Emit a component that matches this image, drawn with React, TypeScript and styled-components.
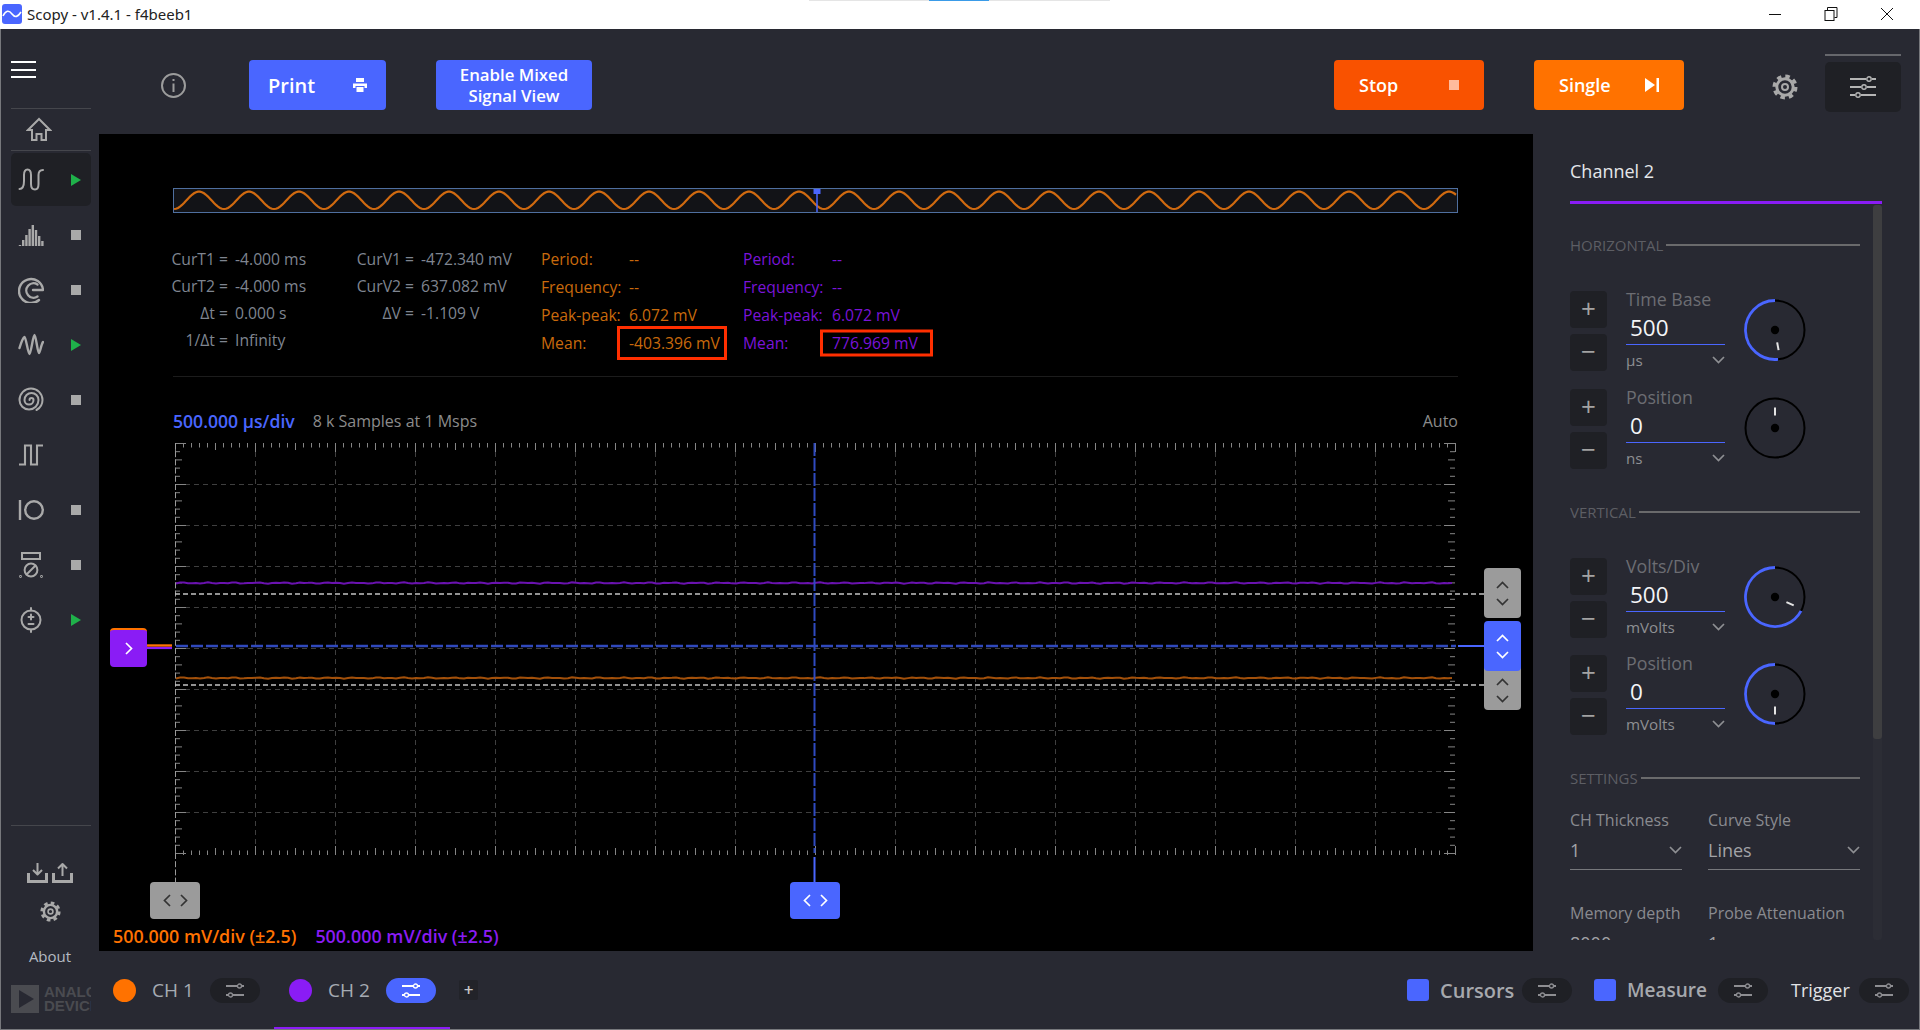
import React, { FC } from "react";
import styled, { createGlobalStyle } from "styled-components";

const BLUE = "#4a66ff";
const PANEL = "#282932";
const DARK = "#1f2025";
const ICON = "#a9a9a9";
const ORANGE = "#ff7200";
const PURPLE = "#8a1cf5";

const GlobalStyle = createGlobalStyle`
  html, body {
    margin: 0;
    padding: 0;
    background: ${PANEL};
  }
  *, *::before, *::after {
    box-sizing: border-box;
  }
  body {
    font-family: "Open Sans", "Noto Sans", sans-serif;
  }
`;

const Window = styled.div`
  width: 1920px;
  height: 1030px;
  display: flex;
  flex-direction: column;
  overflow: hidden;
`;

const TitleBar = styled.div`
  position: relative;
  height: 29px;
  flex: none;
  background: #ffffff;
  display: flex;
  align-items: center;
  padding: 0 0 1px 2px;
`;

const TitleText = styled.span`
  margin-left: 5px;
  font-family: "Noto Sans", sans-serif;
  font-size: 15px;
  color: #222222;
`;

const TaskSliver = styled.div`
  position: absolute;
  top: 0;
  left: 809px;
  width: 301px;
  height: 1px;
  background: linear-gradient(
    to right,
    #e5e5e5 0 120px,
    #3a9be8 120px 180px,
    #e5e5e5 180px
  );
`;

const WindowControls = styled.div`
  margin-left: auto;
  display: flex;
  align-items: center;
  gap: 42px;
  padding-right: 26px;
`;

const Body = styled.div`
  flex: 1;
  min-height: 0;
  display: flex;
  background: ${PANEL};
  border: 1px solid #77787c;
  border-top: none;
`;

/* left tool menu */
const LeftMenu = styled.aside`
  width: 98px;
  flex: none;
  display: flex;
  flex-direction: column;
  padding-top: 32px;
`;

const MenuDivider = styled.div`
  width: 80px;
  height: 1px;
  margin-left: 10px;
  background: #45464c;
`;

const Burger = styled.button`
  width: 25px;
  height: 17px;
  margin: 0 0 30px 10px;
  padding: 0;
  border: none;
  background: transparent;
  display: flex;
  flex-direction: column;
  justify-content: space-between;

  span {
    display: block;
    height: 2px;
    background: #ffffff;
  }
`;

const HomeRow = styled.div`
  height: 41px;
  display: flex;
  align-items: center;
  padding-left: 25px;
`;

const ToolRow = styled.div<{ $active?: boolean }>`
  width: 80px;
  height: ${(p) => (p.$active ? "53px" : "55px")};
  margin: ${(p) => (p.$active ? "2px 0 1px 10px" : "0 0 0 10px")};
  padding: 0 10px 0 7px;
  display: flex;
  align-items: center;
  justify-content: space-between;
  border-radius: 5px;
  background: ${(p) => (p.$active ? DARK : "transparent")};
`;

const StopMark = styled.span`
  width: 10px;
  height: 10px;
  background: ${ICON};
`;

const PlayMark = styled.span`
  width: 0;
  height: 0;
  border-style: solid;
  border-width: 6.5px 0 6.5px 10px;
  border-color: transparent transparent transparent #1fb14a;
`;

const MenuFooter = styled.div`
  margin-top: auto;
  display: flex;
  flex-direction: column;
`;

const TransferIcons = styled.div`
  margin-top: 36px;
  padding-left: 26px;
  display: flex;
  gap: 4px;
`;

const FooterGear = styled.div`
  margin-top: 18px;
  display: flex;
  justify-content: center;
`;

const AboutLabel = styled.div`
  margin-top: 23px;
  text-align: center;
  font-size: 15px;
  line-height: 22px;
  color: #b4bac2;
`;

const AdiLogo = styled.div`
  width: 80px;
  height: 29px;
  margin: 18px 0 15px 10px;
  display: flex;
  gap: 5px;
  overflow: hidden;
`;

const AdiMark = styled.div`
  width: 28px;
  height: 28px;
  flex: none;
  background: #4a4b50;
  display: flex;
  align-items: center;
  justify-content: center;

  &::before {
    content: "";
    border-style: solid;
    border-width: 9px 0 9px 15px;
    border-color: transparent transparent transparent ${PANEL};
    margin-left: 3px;
  }
`;

const AdiText = styled.div`
  font-family: "Liberation Sans", sans-serif;
  font-weight: 700;
  font-size: 15px;
  line-height: 14px;
  color: #4a4b50;
  white-space: nowrap;
`;

/* main column */
const Main = styled.div`
  flex: 1;
  min-width: 0;
  display: flex;
  flex-direction: column;
`;

const Toolbar = styled.div`
  height: 105px;
  flex: none;
  display: flex;
  align-items: flex-start;
  padding: 31px 18px 0 62px;
`;

const InfoSlot = styled.div`
  width: 25px;
  height: 50px;
  margin-right: 63px;
  display: flex;
  align-items: center;
`;

const ActionButton = styled.button<{ $bg: string; $w: number; $pad: number; $size?: number }>`
  width: ${(p) => p.$w}px;
  height: 50px;
  flex: none;
  border: none;
  border-radius: 4px;
  background: ${(p) => p.$bg};
  color: #ffffff;
  font-family: "Open Sans", sans-serif;
  font-weight: 600;
  font-size: ${(p) => p.$size ?? 18}px;
  padding: 0 ${(p) => p.$pad}px;
  display: flex;
  align-items: center;
  justify-content: space-between;
`;

const TwoLineButton = styled(ActionButton)`
  margin-left: 50px;
  justify-content: center;
  text-align: center;
  line-height: 21px;
`;

const RunButtons = styled.div`
  margin-left: auto;
  display: flex;
  gap: 50px;
`;

const GearSlot = styled.div`
  width: 26px;
  height: 26px;
  margin: 14px 27px 0 88px;
`;

const PanelToggle = styled.div`
  width: 76px;
  height: 50px;
  margin-top: 2px;
  position: relative;
  border-radius: 5px;
  background: ${DARK};
  display: flex;
  align-items: center;
  justify-content: center;

  &::before {
    content: "";
    position: absolute;
    left: 0;
    right: 0;
    top: -8px;
    height: 2px;
    background: #66676c;
  }
`;

const Workspace = styled.div`
  flex: 1;
  min-height: 0;
  display: flex;
`;

const PlotArea = styled.section`
  flex: 1;
  min-width: 0;
  background: #000000;
  display: flex;
  flex-direction: column;
`;

const PlotHead = styled.div`
  padding: 54px 75px 0 74px;
`;

const Overview = styled.div`
  height: 25px;
  border: 1px solid #4f6f9f;
  background: #121317;

  svg {
    display: block;
  }
`;

const Readouts = styled.div`
  margin: 32px 0 0 -2px;
  display: flex;
  font-size: 15.7px;
  height: 112px;
`;

const ReadoutGrid = styled.div<{ $w: number; $label: number; $gap: number; $row: number; $color: string; $right?: boolean }>`
  width: ${(p) => p.$w}px;
  flex: none;
  display: grid;
  grid-template-columns: ${(p) => p.$label}px auto;
  column-gap: ${(p) => p.$gap}px;
  grid-auto-rows: ${(p) => p.$row}px;
  align-items: center;
  justify-content: start;
  color: ${(p) => p.$color};
  white-space: nowrap;

  & > span:nth-child(odd) {
    text-align: ${(p) => (p.$right ? "right" : "left")};
  }
`;

const BoxedValue = styled.span<{ $w: number; $h: number }>`
  position: relative;

  &::after {
    content: "";
    position: absolute;
    left: -12px;
    top: 50%;
    width: ${(p) => p.$w}px;
    height: ${(p) => p.$h}px;
    transform: translateY(-50%);
    border: 3px solid #ff2f00;
  }
`;

const HeadDivider = styled.div`
  height: 1px;
  margin-top: 19px;
  background: #1c1c1c;
`;

const PlotInfo = styled.div`
  margin-top: 34px;
  height: 20px;
  display: flex;
  align-items: center;
  font-size: 16px;
  color: #8b8b8b;
`;

const TimeDiv = styled.span`
  color: ${BLUE};
  font-weight: 600;
  font-size: 17.6px;
  margin-right: 18px;
`;

const AutoLabel = styled.span`
  margin-left: auto;
`;

const Stage = styled.div`
  position: relative;
  height: 487px;
  margin-top: 2px;
  flex: none;

  & > svg {
    display: block;
  }
`;

const Handle = styled.div<{ $left: number; $top: number; $w: number; $h: number; $bg: string; $pad?: number }>`
  position: absolute;
  left: ${(p) => p.$left}px;
  top: ${(p) => p.$top}px;
  width: ${(p) => p.$w}px;
  height: ${(p) => p.$h}px;
  padding-top: ${(p) => p.$pad ?? 0}px;
  background: ${(p) => p.$bg};
  border-radius: 4px;
  display: flex;
  align-items: center;
  justify-content: center;
`;

const TriggerHandle = styled.div`
  position: absolute;
  left: 11px;
  top: 195px;
  width: 37px;
  height: 39px;
  background: ${PURPLE};
  border-top: 2px solid ${ORANGE};
  border-radius: 4px;
  display: flex;
  align-items: center;
  justify-content: center;
`;

const ScaleRow = styled.div`
  height: 30px;
  padding: 1px 0 0 14px;
  display: flex;
  align-items: center;
  gap: 19px;
`;

const ScaleLabel = styled.span<{ $color: string }>`
  color: ${(p) => p.$color};
  font-weight: 600;
  font-size: 17.9px;
`;

/* right hand channel panel */
const SidePanel = styled.aside`
  width: 386px;
  flex: none;
  padding: 0 0 11px 37px;
  display: flex;
  flex-direction: column;
`;

const ChannelTitle = styled.div`
  height: 70px;
  padding-top: 22px;
  font-size: 18px;
  line-height: 30px;
  color: #e4e6ea;
  width: 312px;
  flex: none;
  border-bottom: 3px solid ${PURPLE};
`;

const PanelScroll = styled.div`
  flex: 1;
  min-height: 0;
  display: flex;
  width: 312px;
`;

const PanelContent = styled.div`
  width: 290px;
  flex: none;
  overflow: hidden;
`;

const ScrollTrack = styled.div`
  width: 10px;
  margin-left: 13px;
  margin-top: 1px;
  background: #2c2d35;
  border-radius: 3px;

  &::before {
    content: "";
    display: block;
    height: 534px;
    border-radius: 3px;
    background: #3e3e40;
  }
`;

const SectionHead = styled.div<{ $top: number }>`
  height: 20px;
  margin-top: ${(p) => p.$top}px;
  display: flex;
  align-items: center;
  gap: 3px;
  font-size: 15px;
  color: #5d5e64;

  &::after {
    content: "";
    flex: 1;
    height: 1.5px;
    background: #6a6a6c;
  }
`;

const ControlBlock = styled.div<{ $top: number }>`
  height: 80px;
  margin-top: ${(p) => p.$top}px;
  display: flex;
  align-items: flex-start;
`;

const Steppers = styled.div`
  width: 37px;
  flex: none;
  display: flex;
  flex-direction: column;
  gap: 6px;
  margin-right: 19px;
`;

const StepButton = styled.div`
  height: 37px;
  border-radius: 4px;
  background: ${DARK};
  color: #a3a3a3;
  font-size: 26px;
  line-height: 35px;
  text-align: center;
`;

const Field = styled.div`
  width: 99px;
  flex: none;
`;

const FieldLabel = styled.div`
  height: 20px;
  font-size: 17.8px;
  line-height: 17px;
  color: #6c6d72;
  white-space: nowrap;
`;

const FieldValue = styled.div`
  height: 34px;
  padding-left: 4px;
  font-size: 22.5px;
  line-height: 34px;
  color: #f4f5f7;
  border-bottom: 1.5px solid ${BLUE};
`;

const FieldUnit = styled.div`
  margin-top: 3px;
  height: 24px;
  display: flex;
  align-items: center;
  justify-content: space-between;
  font-size: 15.2px;
  color: #8e8f93;
`;

const KnobSlot = styled.div`
  margin: 7px 0 0 18px;
  width: 64px;
  height: 64px;
  flex: none;
`;

const SettingsGrid = styled.div`
  margin-top: 22px;
  display: grid;
  grid-template-columns: 112px 152px;
  column-gap: 26px;
  row-gap: 33px;
`;

const SettingLabel = styled.div`
  height: 20px;
  font-size: 16px;
  line-height: 20px;
  color: #8a8b90;
  white-space: nowrap;
`;

const SettingValue = styled.div`
  height: 40px;
  display: flex;
  align-items: center;
  justify-content: space-between;
  font-size: 18px;
  color: #a2a3a7;
  border-bottom: 1.5px solid #77787c;
`;

/* bottom channel bar */
const BottomBar = styled.div`
  position: relative;
  height: 78px;
  flex: none;
  display: flex;
  align-items: center;
  padding: 0 10px 0 14px;
`;

const ChannelDot = styled.span<{ $color: string }>`
  width: 23px;
  height: 23px;
  flex: none;
  border-radius: 50%;
  background: ${(p) => p.$color};
`;

const ChannelName = styled.span`
  margin-left: 16px;
  width: 58px;
  font-size: 19px;
  color: #a6abb3;
`;

const Pill = styled.div<{ $on?: boolean }>`
  width: 50px;
  height: 25px;
  flex: none;
  border-radius: 13px;
  background: ${(p) => (p.$on ? BLUE : DARK)};
  display: flex;
  align-items: center;
  justify-content: center;
`;

const AddChannel = styled.div`
  width: 19px;
  height: 20px;
  margin-left: 23px;
  border-radius: 2px;
  background: #222329;
  color: #c8c8c8;
  font-size: 17px;
  font-weight: 600;
  line-height: 19px;
  text-align: center;
`;

const ChannelGroup = styled.div<{ $gap?: number }>`
  display: flex;
  align-items: center;
  margin-left: ${(p) => p.$gap ?? 0}px;
`;

const ActiveTabLine = styled.div`
  position: absolute;
  left: 175px;
  bottom: 0;
  width: 176px;
  height: 2px;
  background: ${PURPLE};
`;

const ToolGroups = styled.div`
  margin-left: auto;
  display: flex;
  align-items: center;
`;

const ToolCheck = styled.span`
  width: 22px;
  height: 22px;
  flex: none;
  border-radius: 3px;
  background: ${BLUE};
`;

const ToolName = styled.span<{ $bright?: boolean; $w: number; $size: number }>`
  width: ${(p) => p.$w}px;
  flex: none;
  font-size: ${(p) => p.$size}px;
  font-weight: ${(p) => (p.$bright ? 500 : 600)};
  color: ${(p) => (p.$bright ? "#e2e4e7" : "#a6a8ad")};
  margin-left: 11px;
`;

/* drawings */
const Stroke: FC<{ w?: number; h?: number; box?: string; sw?: number; color?: string; children: React.ReactNode }> = ({
  w = 26,
  h = 26,
  box = "0 0 26 26",
  sw = 2,
  color = ICON,
  children,
}) => (
  <svg
    width={w}
    height={h}
    viewBox={box}
    fill="none"
    stroke={color}
    strokeWidth={sw}
    strokeLinecap="round"
    strokeLinejoin="round"
  >
    {children}
  </svg>
);

const CogIcon: FC<{ size: number }> = ({ size }) => (
  <svg width={size} height={size} viewBox="0 0 26 26" fill="none" stroke={ICON}>
    <circle cx="13" cy="13" r="8.2" strokeWidth="3" />
    <circle cx="13" cy="13" r="10.8" strokeWidth="3.4" strokeDasharray="4.5 3.98" />
    <circle cx="13" cy="13" r="3" strokeWidth="2" />
  </svg>
);

const SliderIcon: FC<{ color?: string; lines?: number }> = ({ color = "#8e8e92", lines = 2 }) =>
  lines === 3 ? (
    <svg width="26" height="22" viewBox="0 0 26 22" fill="none" stroke={color} strokeWidth="2">
      <path d="M0 3h16M22 3h4M0 11h11M17 11h9M0 19h5M11 19h15" />
      <circle cx="19" cy="3" r="2.2" strokeWidth="1.4" />
      <circle cx="14" cy="11" r="2.2" strokeWidth="1.4" />
      <circle cx="8" cy="19" r="2.2" strokeWidth="1.4" />
    </svg>
  ) : (
    <svg width="18" height="15" viewBox="0 0 18 15" fill="none" stroke={color} strokeWidth="1.8">
      <path d="M0 3h11M16 3h2M0 12h2M7 12h11" />
      <circle cx="13.5" cy="3" r="2" strokeWidth="1.3" />
      <circle cx="4.5" cy="12" r="2" strokeWidth="1.3" />
    </svg>
  );

const Chevron: FC<{ dir: "up" | "down" | "left" | "right"; color: string; w?: number; h?: number }> = ({
  dir,
  color,
  w = 13,
  h = 8,
}) => {
  const paths = {
    up: "M1 7 L6.5 1.5 L12 7",
    down: "M1 1 L6.5 6.5 L12 1",
    left: "M7 1 L1.5 6.5 L7 12",
    right: "M1 1 L6.5 6.5 L1 12",
  };
  const vertical = dir === "up" || dir === "down";
  return (
    <svg width={vertical ? w : h} height={vertical ? h : w} viewBox={vertical ? "0 0 13 8" : "0 0 8 13"} fill="none" stroke={color} strokeWidth="1.7">
      <path d={paths[dir]} />
    </svg>
  );
};

const ChevronStack = styled.div`
  display: flex;
  flex-direction: column;
  align-items: center;
  gap: 9px;
`;

const ChevronPair = styled.div`
  display: flex;
  align-items: center;
  gap: 9px;
`;

const Knob: FC<{ sweep: number; tick: number }> = ({ sweep, tick }) => {
  const c = 32;
  const r = 29.5;
  const end = ((-sweep - 90) * Math.PI) / 180;
  const ex = c + r * Math.cos(end);
  const ey = c + r * Math.sin(end);
  const t = ((tick - 90) * Math.PI) / 180;
  return (
    <svg width="64" height="64" viewBox="0 0 64 64" fill="none">
      <circle cx={c} cy={c} r={r} stroke="#000000" strokeWidth="2" />
      {sweep > 0 && (
        <path
          d={`M${c} ${c - r} A${r} ${r} 0 ${sweep > 180 ? 1 : 0} 0 ${ex} ${ey}`}
          stroke={BLUE}
          strokeWidth="2.8"
        />
      )}
      <circle cx={c} cy={c} r="4.2" fill="#000000" />
      <line
        x1={c + 12.5 * Math.cos(t)}
        y1={c + 12.5 * Math.sin(t)}
        x2={c + 20.5 * Math.cos(t)}
        y2={c + 20.5 * Math.sin(t)}
        stroke="#e4e4e4"
        strokeWidth="2"
      />
    </svg>
  );
};

const sinePath = () => {
  const pts: string[] = [];
  for (let x = 0; x <= 1283; x += 2) {
    const y = 11.3 - 8.7 * Math.cos(((x - 25) / 50) * 2 * Math.PI);
    pts.push(`${x},${y.toFixed(2)}`);
  }
  return pts.join(" ");
};

const noisyLine = (y: number) => {
  const pts: string[] = [];
  for (let x = 176; x <= 1455; x += 4) {
    const n = Math.sin(x * 0.37) * Math.sin(x * 0.113) * 0.7;
    pts.push(`${x},${(y + n).toFixed(2)}`);
  }
  return pts.join(" ");
};

const OverviewLine: FC = () => (
  <svg width="1283" height="23" viewBox="0 0 1283 23" fill="none">
    <polyline points={sinePath()} stroke="#d06a10" strokeWidth="2.2" />
    <line x1="643" y1="0" x2="643" y2="23" stroke={BLUE} strokeWidth="1.5" />
    <rect x="639.5" y="-1" width="7" height="6" fill={BLUE} />
  </svg>
);

// plot drawn in page coordinates, the viewBox is the stage's place on the page
const ScopePlot: FC = () => {
  const xs = Array.from({ length: 161 }, (_, i) => i);
  const ys = Array.from({ length: 51 }, (_, i) => i);
  const divX = Array.from({ length: 15 }, (_, i) => 175.5 + 80 * (i + 1)).filter((x) => x !== 815.5);
  const divY = Array.from({ length: 9 }, (_, i) => 483.5 + 41 * i);
  return (
    <svg width="1433" height="487" viewBox="99 432 1433 487" fill="none">
      <g stroke="#3f3f3f" strokeWidth="1" strokeDasharray="5 4">
        {divX.map((x) => (
          <line key={x} x1={x} y1="442" x2={x} y2="854" />
        ))}
        {divY.map((y) => (
          <line key={y} x1="176" y1={y} x2="1455" y2={y} />
        ))}
      </g>
      <g stroke="#858585" strokeWidth="1">
        {xs.map((i) => {
          const x = 175.5 + i * 8;
          const len = i % 10 === 0 ? 9 : i % 5 === 0 ? 7 : 4.5;
          return (
            <g key={i}>
              <line x1={x} y1="442" x2={x} y2={442 + len} />
              <line x1={x} y1="854" x2={x} y2={854 - len} />
            </g>
          );
        })}
        {ys.map((i) => {
          const y = 442.5 + i * 8.2;
          const len = i % 5 === 0 ? 11 : i % 5 === 2 ? 7 : 5;
          return (
            <g key={i}>
              <line x1="175" y1={y} x2={175 + len} y2={y} />
              <line x1="1455" y1={y} x2={1455 - len} y2={y} />
            </g>
          );
        })}
      </g>
      <line x1="175.5" y1="442" x2="175.5" y2="881" stroke="#9a9a9a" strokeDasharray="6 2.2" />
      <polyline points={noisyLine(582)} stroke="#6a12b0" strokeWidth="2" />
      <polyline points={noisyLine(677)} stroke="#a3500a" strokeWidth="2" />
      <g stroke="#c4c4c4" strokeWidth="1.3" strokeDasharray="5 3">
        <line x1="175" y1="593" x2="1484" y2="593" />
        <line x1="175" y1="684" x2="1484" y2="684" />
      </g>
      <line x1="176" y1="645" x2="1456" y2="645" stroke="#3049bd" strokeWidth="2.4" strokeDasharray="12 3" />
      <line x1="1458" y1="645" x2="1486" y2="645" stroke={BLUE} strokeWidth="2" />
      <line x1="814.5" y1="442" x2="814.5" y2="852" stroke="#2f4ac0" strokeWidth="2" strokeDasharray="13 2" />
      <line x1="814.5" y1="856" x2="814.5" y2="882" stroke={BLUE} strokeWidth="2" />
      <line x1="147" y1="644.5" x2="172" y2="644.5" stroke={ORANGE} strokeWidth="2.4" />
      <line x1="147" y1="647" x2="172" y2="647" stroke={PURPLE} strokeWidth="2.2" />
    </svg>
  );
};

const tools: { key: string; run?: boolean; stop?: boolean; icon: React.ReactNode }[] = [
  {
    key: "osc",
    run: true,
    icon: (
      <Stroke>
        <path d="M1.5 22 C5 22 6 19 6 14 V8 C6 4 7.5 2.5 9.5 2.5 C12 2.5 13 4.5 13 8 V17 C13 20.5 14.5 22.5 17 22.5 C19.5 22.5 20.5 20.5 20.5 17 V8 C20.5 5 22 3 25 3" />
      </Stroke>
    ),
  },
  {
    key: "spectrum",
    stop: true,
    icon: (
      <Stroke sw={2.4}>
        {[23, 18, 13, 7, 3, 8, 14, 19].map((top, i) => (
          <line key={i} x1={2 + i * 3.2} y1={top} x2={2 + i * 3.2} y2="24" strokeLinecap="butt" />
        ))}
      </Stroke>
    ),
  },
  {
    key: "network",
    stop: true,
    icon: (
      <Stroke sw={2.4}>
        <path d="M21 23 A12 12 0 1 1 25 13 H15" />
        <path d="M19.5 19.5 A7.2 7.2 0 1 1 19.5 7.5" />
      </Stroke>
    ),
  },
  {
    key: "siggen",
    run: true,
    icon: (
      <Stroke sw={2.4}>
        <path d="M1.5 16 C3 11 5 6 6.5 5 C8 5 10 22 11.5 22 C13 22 15 3 16.5 3 C18 3 19.5 21 21 21 C22 21 23 13 25 10" />
      </Stroke>
    ),
  },
  {
    key: "logic",
    stop: true,
    icon: (
      <Stroke sw={2}>
        <path d="M11.5 13 a2 2 0 0 1 4 0 a4.5 4.5 0 0 1 -9 0 a7 7 0 0 1 14 0 a9.5 9.5 0 0 1 -19 0 a11.5 11.5 0 0 1 23 0 a11.5 11.5 0 0 1 -6 10" />
      </Stroke>
    ),
  },
  {
    key: "pattern",
    icon: (
      <Stroke sw={2.1} h={22} box="0 0 26 22">
        <path d="M1 20.5 H7 V1.5 H13 V20.5 H19 V1.5 H25" strokeLinecap="butt" strokeLinejoin="miter" />
      </Stroke>
    ),
  },
  {
    key: "dio",
    stop: true,
    icon: (
      <Stroke sw={2.4} h={22} box="0 0 26 22">
        <line x1="2" y1="1" x2="2" y2="21" strokeLinecap="butt" />
        <circle cx="16" cy="11" r="8.8" />
      </Stroke>
    ),
  },
  {
    key: "power",
    stop: true,
    icon: (
      <Stroke sw={2}>
        <rect x="4" y="1" width="18" height="6" strokeLinejoin="miter" />
        <circle cx="13" cy="18" r="6.4" />
        <line x1="8.5" y1="22.5" x2="17.5" y2="13.5" />
        <circle cx="2.5" cy="24.5" r="0.4" />
        <circle cx="23.5" cy="24.5" r="0.4" />
      </Stroke>
    ),
  },
  {
    key: "dmm",
    run: true,
    icon: (
      <Stroke sw={2}>
        <circle cx="13" cy="13" r="9.5" />
        <path d="M13 1 V3.5 M13 22.5 V25 M13 7.5 V12.5 M10.5 10 H15.5 M10.5 17 H15.5" />
      </Stroke>
    ),
  },
];

const panelIcons = {
  info: (
    <svg width="25" height="25" viewBox="0 0 25 25" fill="none" stroke="#9c9c9c" strokeWidth="2">
      <circle cx="12.5" cy="12.5" r="11.5" />
      <line x1="12.5" y1="10.5" x2="12.5" y2="19" />
      <line x1="12.5" y1="6" x2="12.5" y2="8" />
    </svg>
  ),
  print: (
    <svg width="14" height="14" viewBox="0 0 14 14" fill="#ffffff">
      <rect x="3" y="0" width="8" height="4" />
      <path d="M0 5.5 H14 V10 H11.5 V8 H2.5 V10 H0 Z" />
      <rect x="3.5" y="9" width="7" height="5" />
    </svg>
  ),
  skip: (
    <svg width="14" height="14" viewBox="0 0 14 14" fill="#ffffff">
      <path d="M0 0 L10 7 L0 14 Z" />
      <rect x="11.5" y="0" width="2.5" height="14" />
    </svg>
  ),
};

const Readout: FC<{ rows: [string, string][]; w: number; label: number; gap: number; row: number; color: string; right?: boolean; boxed?: { w: number; h: number } }> = ({
  rows,
  w,
  label,
  gap,
  row,
  color,
  right,
  boxed,
}) => (
  <ReadoutGrid $w={w} $label={label} $gap={gap} $row={row} $color={color} $right={right}>
    {rows.map(([k, v], i) => (
      <React.Fragment key={k}>
        <span>{k}</span>
        {boxed && i === rows.length - 1 ? <BoxedValue $w={boxed.w} $h={boxed.h}>{v}</BoxedValue> : <span>{v}</span>}
      </React.Fragment>
    ))}
  </ReadoutGrid>
);

const Control: FC<{ top: number; label: string; value: string; unit: string; sweep: number; tick: number }> = ({
  top,
  label,
  value,
  unit,
  sweep,
  tick,
}) => (
  <ControlBlock $top={top}>
    <Steppers>
      <StepButton>+</StepButton>
      <StepButton>−</StepButton>
    </Steppers>
    <Field>
      <FieldLabel>{label}</FieldLabel>
      <FieldValue>{value}</FieldValue>
      <FieldUnit>
        {unit}
        <Chevron dir="down" color="#8e8f93" />
      </FieldUnit>
    </Field>
    <KnobSlot>
      <Knob sweep={sweep} tick={tick} />
    </KnobSlot>
  </ControlBlock>
);

const measure = (mean: string): [string, string][] => [
  ["Period:", "--"],
  ["Frequency:", "--"],
  ["Peak-peak:", "6.072 mV"],
  ["Mean:", mean],
];

const App: FC = () => {
  return (
    <Window>
      <GlobalStyle />
      <TitleBar>
        <svg width="20" height="20" viewBox="0 0 20 20">
          <rect width="20" height="20" rx="3" fill={BLUE} />
          <path d="M1 12 C4 6 7 6 10 10 C13 14 16 13 19 8" fill="none" stroke="#ffffff" strokeWidth="1.6" />
        </svg>
        <TitleText>Scopy - v1.4.1 - f4beeb1</TitleText>
        <TaskSliver />
        <WindowControls>
          <svg width="14" height="14" viewBox="0 0 14 14" stroke="#111111" fill="none">
            <line x1="1" y1="7.5" x2="13" y2="7.5" />
          </svg>
          <svg width="14" height="14" viewBox="0 0 14 14" stroke="#111111" fill="none">
            <rect x="1" y="3.5" width="9" height="10" />
            <path d="M3.5 3 V0.5 H13 V10.5 H10.5" />
          </svg>
          <svg width="14" height="14" viewBox="0 0 14 14" stroke="#111111" fill="none">
            <path d="M1 1 L13 13 M13 1 L1 13" />
          </svg>
        </WindowControls>
      </TitleBar>
      <Body>
        <LeftMenu>
          <Burger>
            <span />
            <span />
            <span />
          </Burger>
          <MenuDivider />
          <HomeRow>
            <Stroke>
              <path d="M13 2 L2 13 H6 V23 H10.5 V17 H15.5 V23 H20 V13 H24 Z" strokeLinejoin="miter" />
            </Stroke>
          </HomeRow>
          <MenuDivider />
          {tools.map((t, i) => (
            <ToolRow key={t.key} $active={i === 0}>
              {t.icon}
              {t.run && <PlayMark />}
              {t.stop && <StopMark />}
            </ToolRow>
          ))}
          <MenuFooter>
            <MenuDivider />
            <TransferIcons>
              <Stroke w={21} h={21} box="0 0 21 21" sw={3}>
                <path d="M1.5 11 V19.5 H19.5 V11" strokeLinecap="butt" strokeLinejoin="miter" />
                <path d="M10.5 1 V12 M6 8 L10.5 12.5 L15 8" strokeLinecap="butt" strokeWidth="2" />
              </Stroke>
              <Stroke w={21} h={21} box="0 0 21 21" sw={3}>
                <path d="M1.5 11 V19.5 H19.5 V11" strokeLinecap="butt" strokeLinejoin="miter" />
                <path d="M10.5 14 V2 M6 6.5 L10.5 2 L15 6.5" strokeLinecap="butt" strokeWidth="2" />
              </Stroke>
            </TransferIcons>
            <FooterGear>
              <CogIcon size={21} />
            </FooterGear>
            <AboutLabel>About</AboutLabel>
            <AdiLogo>
              <AdiMark />
              <AdiText>
                ANALOG
                <br />
                DEVICES
              </AdiText>
            </AdiLogo>
          </MenuFooter>
        </LeftMenu>
        <Main>
          <Toolbar>
            <InfoSlot>{panelIcons.info}</InfoSlot>
            <ActionButton $bg={BLUE} $w={137} $pad={19} $size={20}>
              Print
              {panelIcons.print}
            </ActionButton>
            <TwoLineButton $bg={BLUE} $w={156} $pad={8} $size={16.8}>
              Enable Mixed
              <br />
              Signal View
            </TwoLineButton>
            <RunButtons>
              <ActionButton $bg="#f95200" $w={150} $pad={25}>
                Stop
                <svg width="10" height="10" viewBox="0 0 10 10">
                  <rect width="10" height="10" fill="#ffbb9c" />
                </svg>
              </ActionButton>
              <ActionButton $bg={ORANGE} $w={150} $pad={25}>
                Single
                {panelIcons.skip}
              </ActionButton>
            </RunButtons>
            <GearSlot>
              <CogIcon size={26} />
            </GearSlot>
            <PanelToggle>
              <SliderIcon color="#b5b5b5" lines={3} />
            </PanelToggle>
          </Toolbar>
          <Workspace>
            <PlotArea>
              <PlotHead>
                <Overview>
                  <OverviewLine />
                </Overview>
                <Readouts>
                  <Readout
                    w={184}
                    label={57}
                    gap={7}
                    row={27}
                    color="#7f8590"
                    right
                    rows={[
                      ["CurT1 =", "-4.000 ms"],
                      ["CurT2 =", "-4.000 ms"],
                      ["Δt =", "0.000 s"],
                      ["1/Δt =", "Infinity"],
                    ]}
                  />
                  <Readout
                    w={186}
                    label={59}
                    gap={7}
                    row={27}
                    color="#7f8590"
                    right
                    rows={[
                      ["CurV1 =", "-472.340 mV"],
                      ["CurV2 =", "637.082 mV"],
                      ["ΔV =", "-1.109 V"],
                    ]}
                  />
                  <Readout
                    w={202}
                    label={81}
                    gap={7}
                    row={28}
                    color="#c96a0c"
                    rows={measure("-403.396 mV")}
                    boxed={{ w: 110, h: 34 }}
                  />
                  <Readout
                    w={200}
                    label={82}
                    gap={7}
                    row={28}
                    color="#7a14d8"
                    rows={measure("776.969 mV")}
                    boxed={{ w: 113, h: 27 }}
                  />
                </Readouts>
                <HeadDivider />
                <PlotInfo>
                  <TimeDiv>500.000 µs/div</TimeDiv>8 k Samples at 1 Msps
                  <AutoLabel>Auto</AutoLabel>
                </PlotInfo>
              </PlotHead>
              <Stage>
                <ScopePlot />
                <TriggerHandle>
                  <Chevron dir="right" color="#ffffff" />
                </TriggerHandle>
                <Handle $left={51} $top={449} $w={50} $h={37} $bg="#9b9b9b">
                  <ChevronPair>
                    <Chevron dir="left" color="#333333" />
                    <Chevron dir="right" color="#333333" />
                  </ChevronPair>
                </Handle>
                <Handle $left={691} $top={449} $w={50} $h={37} $bg={BLUE}>
                  <ChevronPair>
                    <Chevron dir="left" color="#ffffff" />
                    <Chevron dir="right" color="#ffffff" />
                  </ChevronPair>
                </Handle>
                <Handle $left={1385} $top={135} $w={37} $h={50} $bg="#9b9b9b">
                  <ChevronStack>
                    <Chevron dir="up" color="#333333" />
                    <Chevron dir="down" color="#333333" />
                  </ChevronStack>
                </Handle>
                <Handle $left={1385} $top={228} $w={37} $h={49} $bg="#9b9b9b" $pad={10}>
                  <ChevronStack>
                    <Chevron dir="up" color="#333333" />
                    <Chevron dir="down" color="#333333" />
                  </ChevronStack>
                </Handle>
                <Handle $left={1385} $top={188} $w={37} $h={50} $bg={BLUE}>
                  <ChevronStack>
                    <Chevron dir="up" color="#ffffff" />
                    <Chevron dir="down" color="#ffffff" />
                  </ChevronStack>
                </Handle>
              </Stage>
              <ScaleRow>
                <ScaleLabel $color={ORANGE}>500.000 mV/div (±2.5)</ScaleLabel>
                <ScaleLabel $color={PURPLE}>500.000 mV/div (±2.5)</ScaleLabel>
              </ScaleRow>
            </PlotArea>
            <SidePanel>
              <ChannelTitle>Channel 2</ChannelTitle>
              <PanelScroll>
                <PanelContent>
                  <SectionHead $top={31}>HORIZONTAL</SectionHead>
                  <Control top={36} label="Time Base" value="500" unit="µs" sweep={186} tick={170} />
                  <Control top={18} label="Position" value="0" unit="ns" sweep={0} tick={0} />
                  <SectionHead $top={33}>VERTICAL</SectionHead>
                  <Control top={36} label="Volts/Div" value="500" unit="mVolts" sweep={242} tick={114} />
                  <Control top={17} label="Position" value="0" unit="mVolts" sweep={180} tick={180} />
                  <SectionHead $top={33}>SETTINGS</SectionHead>
                  <SettingsGrid>
                    <div>
                      <SettingLabel>CH Thickness</SettingLabel>
                      <SettingValue>
                        1
                        <Chevron dir="down" color="#8e8f93" />
                      </SettingValue>
                    </div>
                    <div>
                      <SettingLabel>Curve Style</SettingLabel>
                      <SettingValue>
                        Lines
                        <Chevron dir="down" color="#8e8f93" />
                      </SettingValue>
                    </div>
                    <div>
                      <SettingLabel>Memory depth</SettingLabel>
                      <SettingValue>8000</SettingValue>
                    </div>
                    <div>
                      <SettingLabel>Probe Attenuation</SettingLabel>
                      <SettingValue>1</SettingValue>
                    </div>
                  </SettingsGrid>
                </PanelContent>
                <ScrollTrack />
              </PanelScroll>
            </SidePanel>
          </Workspace>
          <BottomBar>
            <ChannelDot $color={ORANGE} />
            <ChannelName>CH 1</ChannelName>
            <Pill>
              <SliderIcon />
            </Pill>
            <ChannelGroup $gap={29}>
              <ChannelDot $color={PURPLE} />
              <ChannelName>CH 2</ChannelName>
              <Pill $on>
                <SliderIcon color="#ffffff" />
              </Pill>
            </ChannelGroup>
            <AddChannel>+</AddChannel>
            <ActiveTabLine />
            <ToolGroups>
              <ToolCheck />
              <ToolName $w={82} $size={20}>Cursors</ToolName>
              <Pill>
                <SliderIcon />
              </Pill>
              <ChannelGroup $gap={22}>
                <ToolCheck />
                <ToolName $w={91} $size={19}>Measure</ToolName>
                <Pill>
                  <SliderIcon />
                </Pill>
              </ChannelGroup>
              <ChannelGroup $gap={12}>
                <ToolName $bright $w={68} $size={18}>Trigger</ToolName>
                <Pill>
                  <SliderIcon />
                </Pill>
              </ChannelGroup>
            </ToolGroups>
          </BottomBar>
        </Main>
      </Body>
    </Window>
  );
};

export default App;
